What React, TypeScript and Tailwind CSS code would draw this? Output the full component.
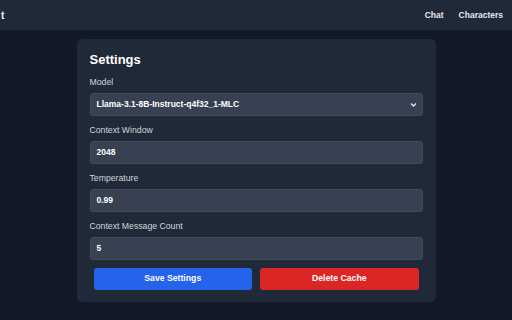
import React from "react";

const font = { fontFamily: '"Liberation Sans", Arial, sans-serif' };

function Field({ label, value, select }: { label: string; value: string; select?: boolean }) {
  return (
    <div className="flex flex-col mb-[8px]">
      <div className="h-[12px] leading-[12px] text-[8.7px] text-gray-300 mb-[5px]">{label}</div>
      <div className="relative h-[23px] rounded-[3px] bg-[#374151] border border-[#3f4a5a] flex items-center px-[6px]">
        <span className="text-[8.5px] font-bold text-white">{value}</span>
        {select && (
          <svg className="absolute right-[5px] top-[8px]" width="7" height="6" viewBox="0 0 7 6">
            <path d="M1 1.5 L3.5 4 L6 1.5" stroke="#e5e7eb" strokeWidth="1.4" fill="none" />
          </svg>
        )}
      </div>
    </div>
  );
}

export default function App() {
  return (
    <div className="min-h-[320px] w-[512px] bg-[#111827] overflow-hidden" style={font}>
      <div className="h-[30px] bg-[#1f2937] flex items-center justify-between">
        <span className="text-[10px] font-bold text-white pl-[1px]">t</span>
        <div className="flex items-center gap-[15px] pr-[9px] text-[8.5px] font-bold text-gray-200">
          <span>Chat</span>
          <span>Characters</span>
        </div>
      </div>
      <div className="w-[359px] mx-auto mt-[9px] bg-[#1f2937] rounded-[5px] px-[13px] pt-[12px] pb-[12px]">
        <div className="h-[18px] leading-[18px] text-[13px] font-bold text-white mb-[7px]">Settings</div>
        <Field label="Model" value="Llama-3.1-8B-Instruct-q4f32_1-MLC" select />
        <Field label="Context Window" value="2048" />
        <Field label="Temperature" value="0.99" />
        <Field label="Context Message Count" value="5" />
        <div className="flex gap-[8px] px-[4px]">
          <button className="flex-1 h-[22px] rounded-[3px] bg-[#2563eb] text-white text-[8.7px] font-bold">Save Settings</button>
          <button className="flex-1 h-[22px] rounded-[3px] bg-[#dc2626] text-white text-[8.7px] font-bold">Delete Cache</button>
        </div>
      </div>
    </div>
  );
}
